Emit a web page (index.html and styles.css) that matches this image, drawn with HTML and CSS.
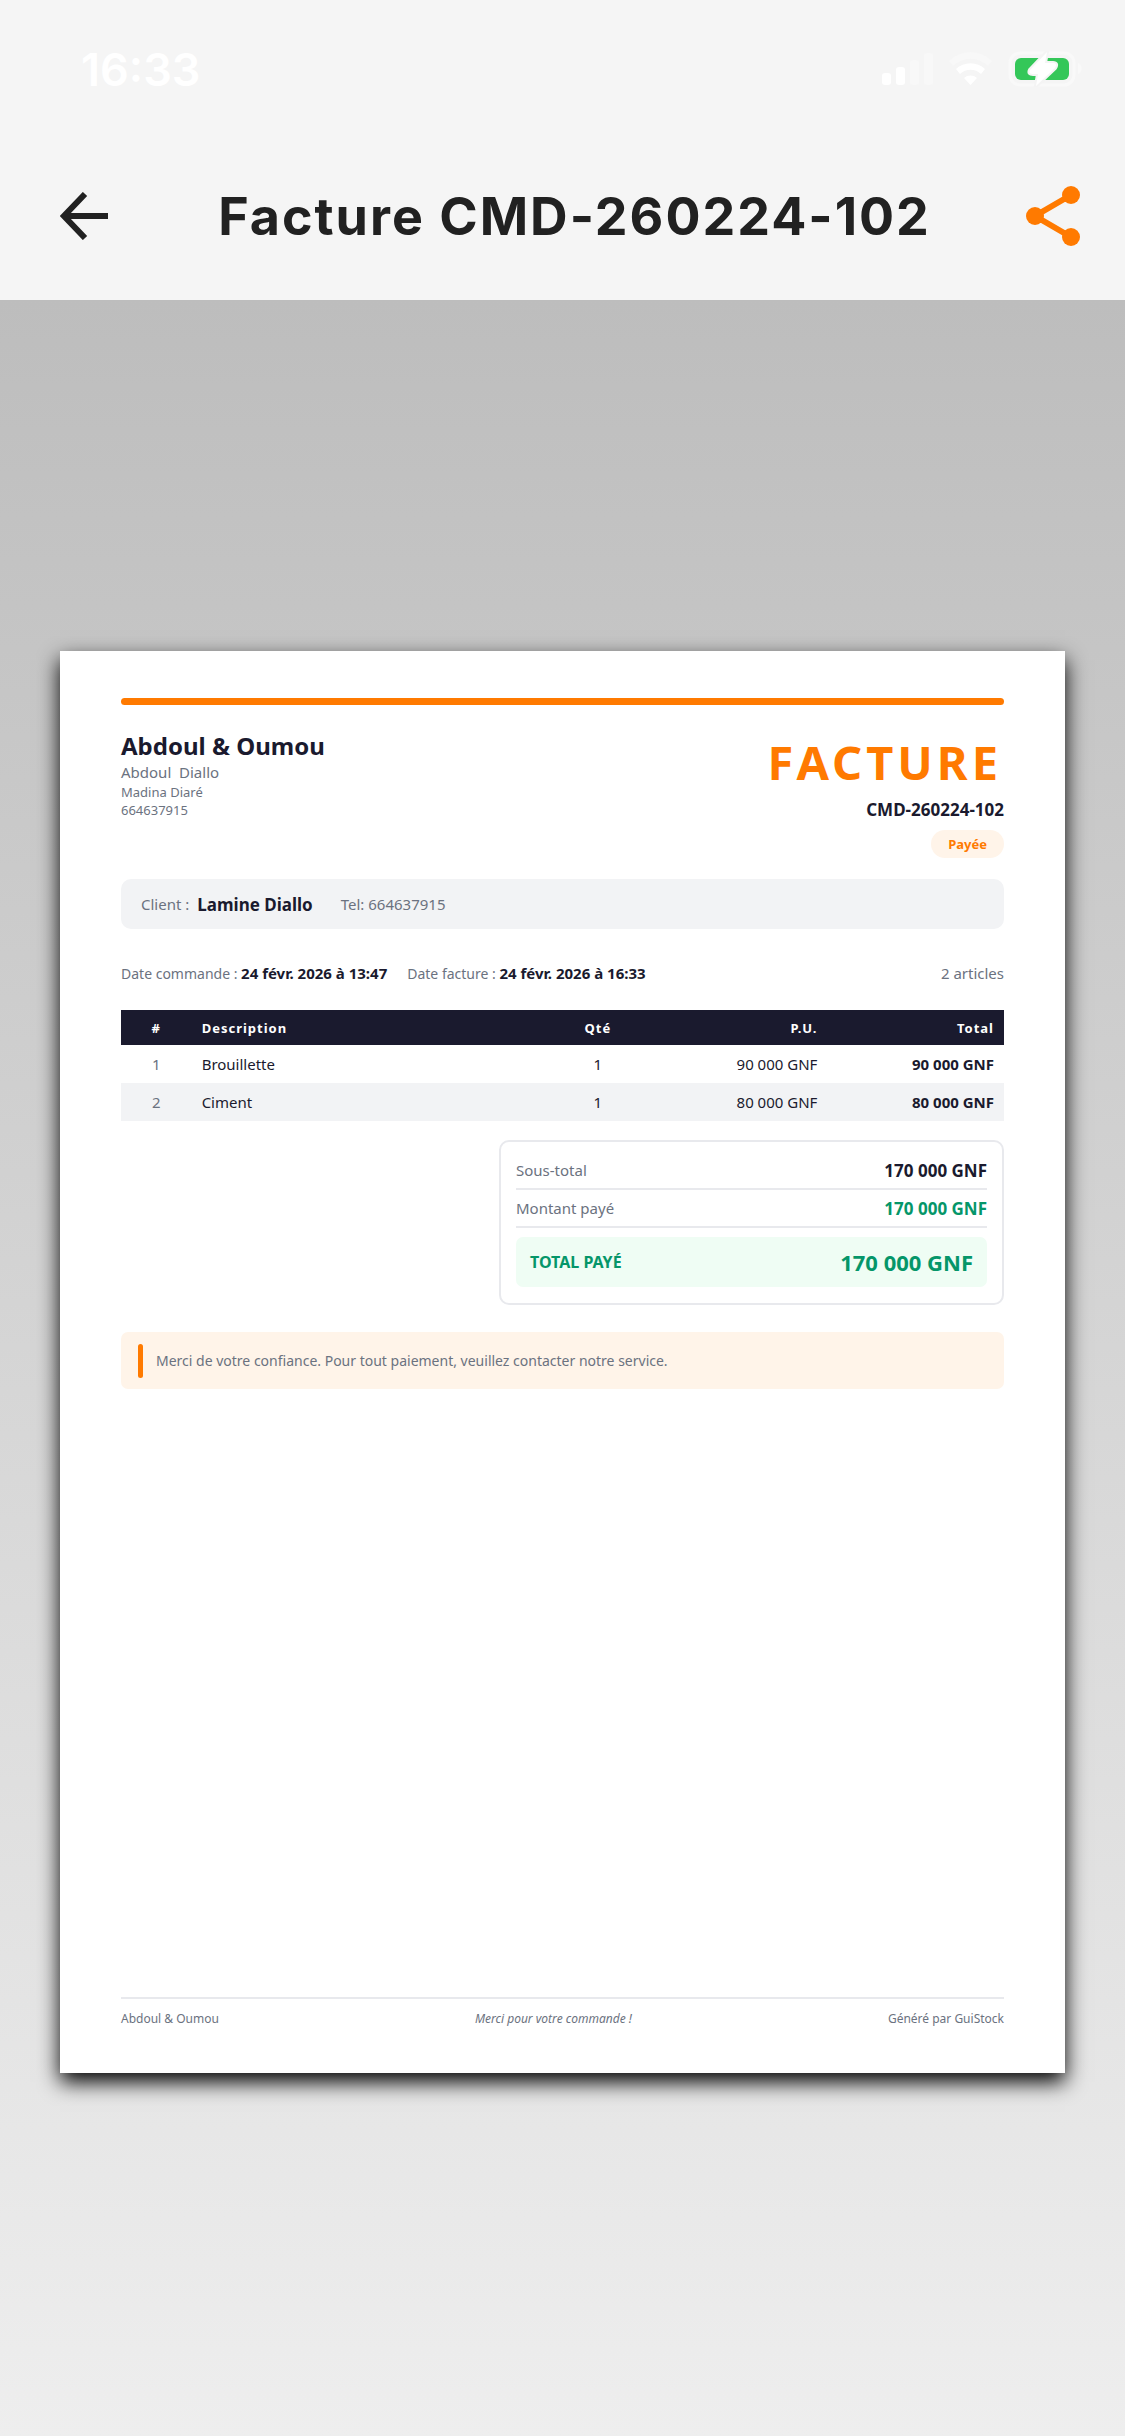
FILE: index.html
```html
<!DOCTYPE html>
<html lang="fr">
<head>
    <meta charset="UTF-8">
    <meta name="viewport" content="width=device-width, initial-scale=1.0">
    <title>Facture CMD-260224-102</title>
    <link rel="stylesheet" href="styles.css">
</head>
<body>
    <header class="top">
        <div class="status-bar">
            <span class="time">16:33</span>
            <svg class="status-icons" viewBox="0 0 202 36" width="202" height="36">
                <!-- Signal -->
                <g fill="#fff">
                    <rect x="1" y="22" width="9" height="12" rx="3"/>
                    <rect x="15" y="16" width="9" height="18" rx="3"/>
                </g>
                <g fill="#f8f8f8">
                    <rect x="29" y="9" width="9" height="25" rx="3"/>
                    <rect x="43" y="2" width="9" height="32" rx="3"/>
                </g>
                <!-- Wifi -->
                <path d="M68 10a31 31 0 0 1 43 0l-4 5a25 25 0 0 0 -35 0z" fill="#f8f8f8"/>
                <path d="M75 18a21 21 0 0 1 29 0l-4 5a15 15 0 0 0 -21 0z" fill="#fff"/>
                <path d="M83 27a10 10 0 0 1 13 0l-6.500 7z" fill="#fff"/>
                <!-- Battery -->
                <rect x="129" y="2" width="64" height="32" rx="10" fill="none" stroke="#f9f9f9" stroke-width="3"/>
                <path d="M197 12a6 6 0 0 1 0 11z" fill="#f9f9f9"/>
                <rect x="134" y="7" width="54" height="22" rx="6" fill="#34c759"/>
                <path d="M166 1L149 19Q147 23 152 23H157L155 35L174 17Q177 12 172 12H164L166 1z" fill="#fff" stroke="#f4f4f4" stroke-width="4" paint-order="stroke"/>
            </svg>
        </div>
        <div class="app-bar">
            <button class="back" type="button" aria-label="Retour">
                <svg viewBox="0 0 48 48" width="48" height="48" fill="none" stroke="#212121" stroke-width="6">
                    <path d="M48 24H6M25 2L4 24L25 46"/>
                </svg>
            </button>
            <h1>Facture CMD-260224-102</h1>
            <button class="share" type="button" aria-label="Partager">
                <svg viewBox="0 0 54 60" width="54" height="60" fill="#ff7a00">
                    <path d="M45 9L9 30L45 51" fill="none" stroke="#ff7a00" stroke-width="6"/>
                    <circle cx="45" cy="9" r="9"/>
                    <circle cx="9" cy="30" r="9"/>
                    <circle cx="45" cy="51" r="9"/>
                </svg>
            </button>
        </div>
    </header>

    <main class="viewer">
        <article class="invoice">
            <div class="accent"></div>

            <section class="invoice-header">
                <div class="seller">
                    <h2>Abdoul &amp; Oumou</h2>
                    <p class="owner">Abdoul&nbsp; Diallo</p>
                    <p>Madina Diaré</p>
                    <p>664637915</p>
                </div>
                <div class="document">
                    <h2>FACTURE</h2>
                    <p class="number">CMD-260224-102</p>
                    <span class="badge">Payée</span>
                </div>
            </section>

            <section class="client">
                <span>Client :</span>
                <strong>Lamine Diallo</strong>
                <span class="tel">Tel: 664637915</span>
            </section>

            <section class="dates">
                <p>Date commande : <strong>24 févr. 2026 à 13:47</strong></p>
                <p>Date facture : <strong>24 févr. 2026 à 16:33</strong></p>
                <p class="count">2 articles</p>
            </section>

            <table class="items">
                <thead>
                    <tr>
                        <th class="col-num">#</th>
                        <th class="col-desc">Description</th>
                        <th class="col-qty">Qté</th>
                        <th class="col-price">P.U.</th>
                        <th class="col-total">Total</th>
                    </tr>
                </thead>
                <tbody>
                    <tr>
                        <td class="col-num">1</td>
                        <td class="col-desc">Brouillette</td>
                        <td class="col-qty">1</td>
                        <td class="col-price">90 000 GNF</td>
                        <td class="col-total">90 000 GNF</td>
                    </tr>
                    <tr>
                        <td class="col-num">2</td>
                        <td class="col-desc">Ciment</td>
                        <td class="col-qty">1</td>
                        <td class="col-price">80 000 GNF</td>
                        <td class="col-total">80 000 GNF</td>
                    </tr>
                </tbody>
            </table>

            <section class="totals">
                <div class="total-row">
                    <span>Sous-total</span>
                    <strong>170 000 GNF</strong>
                </div>
                <div class="total-row paid">
                    <span>Montant payé</span>
                    <strong>170 000 GNF</strong>
                </div>
                <div class="grand-total">
                    <span>TOTAL PAYÉ</span>
                    <strong>170 000 GNF</strong>
                </div>
            </section>

            <section class="note">
                <p>Merci de votre confiance. Pour tout paiement, veuillez contacter notre service.</p>
            </section>

            <footer class="invoice-footer">
                <span>Abdoul &amp; Oumou</span>
                <em>Merci pour votre commande !</em>
                <span>Généré par GuiStock</span>
            </footer>
        </article>
    </main>
</body>
</html>
```
FILE: styles.css
```css
* {
    box-sizing: border-box;
}

body {
    display: flex;
    flex-direction: column;
    min-height: 100vh;
    margin: 0;
    font-family: "Noto Sans", sans-serif;
    color: #1a1a2e;
}

h1,
h2,
p {
    margin: 0;
}

strong {
    font-weight: bold;
}

button {
    display: flex;
    align-items: center;
    padding: 0;
    border: none;
    background: none;
    cursor: pointer;
}

/* Status bar and app bar */
.top {
    background-color: #f5f5f5;
    font-family: Inter, sans-serif;
}

.status-bar {
    display: flex;
    justify-content: space-between;
    align-items: center;
    height: 132px;
    padding: 6px 42px 0 81px;
}

.time {
    color: #fff;
    font-size: 45px;
    font-weight: 600;
}

.app-bar {
    display: flex;
    align-items: center;
    height: 168px;
}

.app-bar h1 {
    flex: 1;
    padding-top: 2px;
    color: #212121;
    font-size: 52px;
    font-weight: 700;
    line-height: 64px;
    letter-spacing: 2px;
    text-align: center;
    white-space: nowrap;
}

.back {
    width: 168px;
    height: 144px;
    padding-left: 60px;
}

.share {
    justify-content: center;
    width: 144px;
    height: 144px;
}

/* Grey area behind the sheet */
.viewer {
    display: flex;
    flex: 1;
    flex-direction: column;
    justify-content: center;
    padding: 0 60px 12px;
    background: linear-gradient(#bdbdbd, #eeeeee);
}

.invoice {
    display: flex;
    flex-direction: column;
    aspect-ratio: 210 / 297;
    padding: 47px 61px 44px;
    background-color: #fff;
    box-shadow: 0 9px 20px #000;
}

.accent {
    height: 7px;
    border-radius: 4px;
    background-color: #ff7a00;
}

.invoice-header {
    display: flex;
    justify-content: space-between;
    margin-top: 25px;
}

.seller {
    color: #6b7280;
    font-size: 13px;
    line-height: 18px;
}

.seller h2 {
    color: #1a1a2e;
    font-size: 24px;
    line-height: 32px;
}

.seller .owner {
    font-size: 15px;
    line-height: 21px;
}

.document {
    display: flex;
    flex-direction: column;
    align-items: flex-end;
}

.document h2 {
    padding-right: 2px;
    color: #ff7a00;
    font-size: 47px;
    line-height: 64px;
    letter-spacing: 4px;
}

.number {
    margin-top: 4px;
    font-size: 17px;
    font-weight: bold;
    line-height: 24px;
}

.badge {
    margin-top: 8px;
    padding: 0 17px;
    border-radius: 16px;
    background-color: #fff4e9;
    color: #ff7a00;
    font-size: 13px;
    font-weight: bold;
    line-height: 28px;
}

.client {
    display: flex;
    align-items: center;
    height: 50px;
    margin-top: 21px;
    padding: 0 20px;
    border-radius: 10px;
    background-color: #f2f3f5;
    color: #6b7280;
    font-size: 15px;
}

.client strong {
    margin-left: 8px;
    color: #1a1a2e;
    font-size: 17px;
}

.tel {
    margin-left: 28px;
}

.dates {
    display: flex;
    align-items: baseline;
    gap: 20px;
    margin-top: 32px;
    color: #6b7280;
    font-size: 14px;
    line-height: 24px;
}

.dates strong {
    color: #1a1a2e;
    font-size: 15px;
}

.dates .count {
    margin-left: auto;
    font-size: 15px;
}

/* Items table */
.items {
    width: 100%;
    margin-top: 24px;
    border-collapse: collapse;
    table-layout: fixed;
    font-size: 15px;
}

.items th,
.items td {
    height: 38px;
    padding: 0 10px;
}

.items th {
    height: 35px;
    background-color: #1a1a2e;
    color: #fff;
    font-size: 13px;
    letter-spacing: 1px;
}

.items tbody tr:nth-child(even) {
    background-color: #f2f3f5;
}

.items .col-num {
    width: 8%;
    text-align: center;
}

.items td.col-num {
    color: #6b7280;
}

.items .col-desc {
    width: 40%;
    text-align: left;
}

.items .col-qty {
    width: 12%;
    text-align: center;
}

.items .col-price {
    width: 20%;
    text-align: right;
}

.items .col-total {
    width: 20%;
    text-align: right;
}

.items td.col-total {
    font-weight: bold;
}

/* Totals box */
.totals {
    align-self: flex-end;
    width: 505px;
    margin-top: 19px;
    padding: 10px 15px 16px;
    border: 2px solid #e8e9ed;
    border-radius: 10px;
    color: #6b7280;
    font-size: 15px;
}

.total-row {
    display: flex;
    justify-content: space-between;
    align-items: center;
    height: 38px;
    border-bottom: 2px solid #e8e9ed;
}

.total-row strong {
    color: #1a1a2e;
    font-size: 17px;
}

.total-row.paid strong {
    color: #059669;
}

.grand-total {
    display: flex;
    justify-content: space-between;
    align-items: center;
    height: 50px;
    margin-top: 9px;
    padding: 0 14px;
    border-radius: 7px;
    background-color: #effdf4;
    color: #059669;
    font-size: 16px;
    font-weight: bold;
}

.grand-total strong {
    font-size: 22px;
}

.note {
    display: flex;
    align-items: center;
    height: 57px;
    margin-top: 27px;
    padding: 0 17px;
    border-radius: 7px;
    background-color: #fff4e9;
    color: #6b7280;
    font-size: 14px;
}

.note::before {
    content: "";
    width: 5px;
    height: 34px;
    margin-right: 13px;
    border-radius: 3px;
    background-color: #ff7a00;
}

.invoice-footer {
    display: flex;
    justify-content: space-between;
    margin-top: auto;
    padding-top: 10px;
    border-top: 2px solid #e8e9ed;
    color: #6b7280;
    font-size: 12px;
    line-height: 20px;
}
```
